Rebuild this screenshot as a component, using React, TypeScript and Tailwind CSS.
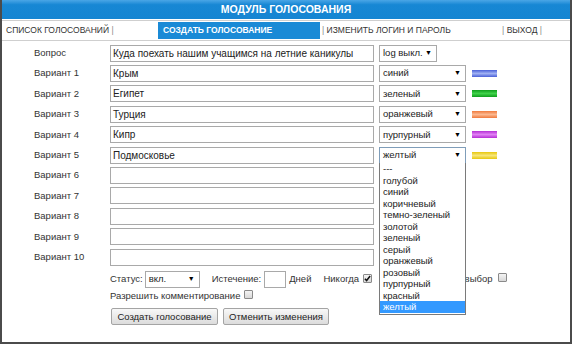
import React from "react";

const font = "font-['Liberation_Sans',Arial,sans-serif]";

const rows: { label: string; value: string; color?: string; swatch?: string }[] = [
  { label: "Вариант 1", value: "Крым", color: "синий", swatch: "bg-[linear-gradient(to_bottom,#4a60d8,#9fb0f3_50%,#4a60d8)]" },
  { label: "Вариант 2", value: "Египет", color: "зеленый", swatch: "bg-[linear-gradient(to_bottom,#0f9e1c,#3fd24a_50%,#0f9e1c)]" },
  { label: "Вариант 3", value: "Турция", color: "оранжевый", swatch: "bg-[linear-gradient(to_bottom,#f07a3c,#fbb890_50%,#f07a3c)]" },
  { label: "Вариант 4", value: "Кипр", color: "пурпурный", swatch: "bg-[linear-gradient(to_bottom,#b52ed6,#e080f3_50%,#b52ed6)]" },
  { label: "Вариант 5", value: "Подмосковье", color: "желтый", swatch: "bg-[linear-gradient(to_bottom,#e8c70e,#f6e67a_50%,#e8c70e)]" },
  { label: "Вариант 6", value: "" },
  { label: "Вариант 7", value: "" },
  { label: "Вариант 8", value: "" },
  { label: "Вариант 9", value: "" },
  { label: "Вариант 10", value: "" },
];

const options = [
  "---", "голубой", "синий", "коричневый", "темно-зеленый", "золотой", "зеленый",
  "серый", "оранжевый", "розовый", "пурпурный", "красный", "желтый",
];

const Select: React.FC<{ value: string; width: string; focused?: boolean }> = ({ value, width, focused }) => (
  <div className={`${width} h-[17px] flex items-center justify-between pl-[3px] pr-[4px] bg-white border ${focused ? "border-[#7f9db9]" : "border-[#a9a9a9]"} text-[9.5px] text-[#222]`}>
    <span>{value}</span>
    <span className="text-[7px] text-black">▼</span>
  </div>
);

const Check: React.FC<{ checked?: boolean }> = ({ checked }) => (
  <span className="inline-flex w-[9px] h-[9px] items-center justify-center border border-[#8a8a8a] bg-[linear-gradient(to_bottom,#f4f4f4,#d8d8d8)] rounded-[1px]">
    {checked && (
      <svg width="7" height="7" viewBox="0 0 8 8">
        <path d="M1 4.2 L3 6.3 L7 1.2" stroke="#111" strokeWidth="1.7" fill="none" />
      </svg>
    )}
  </span>
);

const Button: React.FC<{ children: React.ReactNode; width: string }> = ({ children, width }) => (
  <div className={`${width} h-[17px] flex items-center justify-center border border-[#a4a4a4] rounded-[2px] bg-[linear-gradient(to_bottom,#f8f8f8,#dcdcdc)] text-[9.5px] text-[#222]`}>
    {children}
  </div>
);

export default function App() {
  return (
    <div className={`${font} w-[572px] h-[344px] bg-white border-x-2 border-b-2 border-[#4b4b4b] text-[#333]`}>
      <div className="h-[19px] bg-[linear-gradient(to_bottom,#4aa6e6,#1787d4_25%,#1585d2)] flex items-center justify-center text-white font-bold text-[10.5px]">
        МОДУЛЬ ГОЛОСОВАНИЯ
      </div>
      <div className="h-[21px] mt-[1px] border-t border-b border-[#cfcfcf] flex items-center text-[8.5px] text-[#333]">
        <div className="w-[156px] pl-[4px]">СПИСОК ГОЛОСОВАНИЙ <span className="text-[#888]">|</span></div>
        <div className="w-[162px] h-[17px] flex items-center pl-[5px] bg-[#1a8ad6] text-white font-bold">СОЗДАТЬ ГОЛОСОВАНИЕ</div>
        <div className="pl-[2px]"><span className="text-[#888]">|</span> ИЗМЕНИТЬ ЛОГИН И ПАРОЛЬ</div>
        <div className="ml-auto mr-[28px]"><span className="text-[#888]">|</span> ВЫХОД <span className="text-[#888]">|</span></div>
      </div>

      <div className="relative pt-[2px] text-[9.5px]">
        <div className="flex items-center h-[20.4px]">
          <div className="w-[108px] pl-[32px]">Вопрос</div>
          <div className="w-[264px] h-[17px] border border-[#a9a9a9] px-[2px] flex items-center text-[10px] text-[#222]">
            Куда поехать нашим учащимся на летние каникулы
          </div>
          <div className="ml-[5px]"><Select value="log выкл." width="w-[58px]" /></div>
        </div>
        {rows.map((r, i) => (
          <div key={r.label} className="flex items-center h-[20.4px]">
            <div className="w-[108px] pl-[32px]">{r.label}</div>
            <div className="w-[264px] h-[17px] border border-[#a9a9a9] px-[2px] flex items-center text-[10px] text-[#222]">
              {r.value}
            </div>
            {r.color && (
              <>
                <div className="ml-[5px]"><Select value={r.color} width="w-[87px]" focused={i === 4} /></div>
                <div className={`ml-[6px] w-[25px] h-[7px] ${r.swatch}`} />
              </>
            )}
          </div>
        ))}

        <div className="flex items-center h-[16px] mt-[4px] pl-[108px]">
          <span>Статус:</span>
          <div className="ml-[2px]"><Select value="вкл." width="w-[55px]" /></div>
          <span className="ml-[12px]">Истечение:</span>
          <div className="ml-[3px] w-[22px] h-[17px] border border-[#a9a9a9]" />
          <span className="ml-[3px]">Дней</span>
          <span className="ml-[12px]">Никогда</span>
          <span className="ml-[4px]"><Check checked /></span>
          <span className="ml-[18px]">Множественный выбор</span>
          <span className="ml-[5px]"><Check /></span>
        </div>
        <div className="flex items-center h-[16px] mt-[1px] pl-[108px]">
          <span>Разрешить комментирование</span>
          <span className="ml-[4px]"><Check /></span>
        </div>
        <div className="flex items-center gap-[5px] mt-[4px] pl-[109px]">
          <Button width="w-[107px]">Создать голосование</Button>
          <Button width="w-[106px]">Отменить изменения</Button>
        </div>

        <div className="absolute left-[377px] top-[122px] w-[87px] bg-white border border-[#7a7a7a] border-t-0 text-[#222] pb-[1px]">
          {options.map((o) => (
            <div key={o} className={`h-[11.5px] leading-[11.5px] pl-[3px] ${o === "желтый" ? "bg-[#3399ff] text-white" : ""}`}>
              {o}
            </div>
          ))}
        </div>
      </div>
    </div>
  );
}
